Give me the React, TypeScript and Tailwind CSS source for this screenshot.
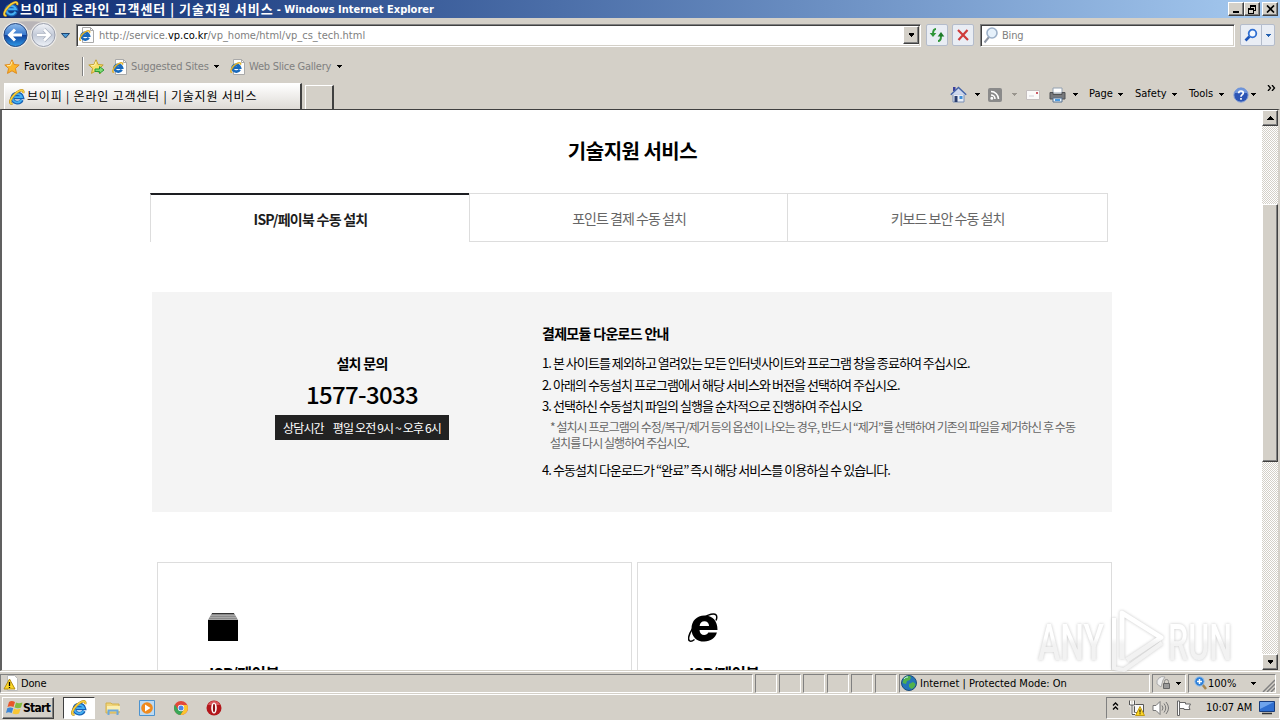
import type { ReactNode } from "react";

const ui = "font-['DejaVu_Sans_Condensed','DejaVu_Sans','Noto_Sans_CJK_KR',sans-serif] [font-stretch:condensed]";
const kr = "font-['Noto_Sans_CJK_KR',sans-serif]";

function IELogo({ size = 16, className = "" }: { size?: number; className?: string }) {
  return (
    <svg width={size} height={size} viewBox="0 0 16 16" className={`shrink-0 ${className}`} fill="none">
      <path d="M13 10.800A5.200 5.200 0 0 1 3.200 8.800 5.200 5.200 0 0 1 13.300 8.400H5" stroke="#1660b4" strokeWidth="3.600" />
      <path d="M12.600 10.800A4.900 4.900 0 0 1 3.400 8.800 5 5 0 0 1 12.900 8.100H5.200" stroke="#45b0f2" strokeWidth="1.800" />
      <path d="M3.400 14.300C1.400 15 .7 13.600 1.600 11.200 2.900 7.600 7 3.200 11 1.700c2.700-1 3.900.1 3.100 2.300" stroke="#b8861c" strokeWidth="2.400" />
      <path d="M3.400 14.300C1.400 15 .7 13.600 1.600 11.200 2.900 7.600 7 3.200 11 1.700c2.700-1 3.900.1 3.100 2.300" stroke="#f7d33f" strokeWidth="1.400" />
    </svg>
  );
}

function PageIcon() {
  return (
    <svg width="16" height="16" viewBox="0 0 16 16" className="shrink-0" fill="none">
      <path d="M3.500.5h8l3 3v12h-11z" fill="#fdfdfd" stroke="#a9a9a9" />
      <path d="M11.500.5v3h3" stroke="#a9a9a9" />
      <path d="M9.700 10.600A3.900 3.900 0 0 1 2.400 9a3.900 3.900 0 0 1 7.600-.4H4" stroke="#1a6abc" strokeWidth="2.600" />
      <path d="M2 13.200C.6 13.600.4 12.400 1.200 10.600 2.300 8 5.400 5 8.200 4c2-.6 2.900.1 2.300 1.700" stroke="#dfb02c" strokeWidth="1.400" />
    </svg>
  );
}

function Caret({ color = "#000", className = "" }: { color?: string; className?: string }) {
  return (
    <svg width="5" height="3" viewBox="0 0 5 3" className={`shrink-0 ${className}`} shapeRendering="crispEdges">
      <path d="M0 0h5L2.500 3z" fill={color} />
    </svg>
  );
}

function WinButton({ children, className = "" }: { children: ReactNode; className?: string }) {
  return (
    <div className={`flex shrink-0 items-center justify-center border border-t-white border-l-white border-r-[#404040] border-b-[#404040] bg-[#d4d0c8] shadow-[inset_-1px_-1px_0_#808080] ${className}`}>
      {children}
    </div>
  );
}

function TitleBar() {
  return (
    <div className="flex h-[18px] items-center bg-linear-to-r from-[#0f2b72] to-[#a6caf0] pl-[3px]">
      <IELogo />
      <span className={`${ui} ml-px flex items-center text-[11px] leading-[18px] font-bold whitespace-nowrap text-white`}>
        <span className={`${kr} text-[13px] tracking-[1px]`}>브이피 | 온라인 고객센터 | 기술지원 서비스</span>
        <span className="ml-[3px] pt-px">- Windows Internet Explorer</span>
      </span>
      <div className="mr-[2px] ml-auto flex">
        <WinButton className="h-[14px] w-4">
          <svg width="10" height="9" shapeRendering="crispEdges"><path d="M2 6h6v2H2z" /></svg>
        </WinButton>
        <WinButton className="h-[14px] w-4">
          <svg width="10" height="10" fill="none" stroke="#000" shapeRendering="crispEdges">
            <path d="M3 1h6M3 2h5.500v4H7M3.500 2v2M1 4h6M1 5h5.500v4h-5z" />
          </svg>
        </WinButton>
        <WinButton className="ml-[2px] h-[14px] w-4">
          <svg width="9" height="8" stroke="#000" strokeWidth="1.700"><path d="M1 .5 8 7.500M8 .5 1 7.500" /></svg>
        </WinButton>
      </div>
    </div>
  );
}

function NavOrbs() {
  return (
    <svg width="74" height="30" viewBox="0 0 74 30" className="shrink-0">
      <defs>
        <linearGradient id="back" x1="0" y1="0" x2="0" y2="1">
          <stop offset="0" stopColor="#8fbcec" />
          <stop offset=".48" stopColor="#3a7ace" />
          <stop offset=".5" stopColor="#0f3f9a" />
          <stop offset="1" stopColor="#2f9be8" />
        </linearGradient>
        <linearGradient id="fwd" x1="0" y1="0" x2="0" y2="1">
          <stop offset="0" stopColor="#f3f5f9" />
          <stop offset=".5" stopColor="#c3cad8" />
          <stop offset="1" stopColor="#eef2f8" />
        </linearGradient>
      </defs>
      <path d="M15 2c8-1 20-1 29 0v8H15z" fill="#b9b5b8" />
      <circle cx="15.500" cy="15" r="13" fill="#eceae8" />
      <circle cx="43.500" cy="15" r="13" fill="#eceae8" />
      <circle cx="15.500" cy="15" r="11.500" fill="url(#back)" stroke="#27477f" />
      <circle cx="43.500" cy="15" r="11.500" fill="url(#fwd)" stroke="#9a9fac" />
      <path d="M22 15H10M15 9.500 9.500 15l5.500 5.500" stroke="#fff" strokeWidth="3" fill="none" />
      <path d="M37 15h12M44 9.500l5.500 5.500-5.500 5.500" stroke="#a9b0bf" strokeWidth="4" fill="none" />
      <path d="M37 15h12M44 9.500l5.500 5.500-5.500 5.500" stroke="#fff" strokeWidth="2.600" fill="none" />
      <path d="M61.500 13.500h8l-4 4.500z" fill="#4e9bd6" stroke="#1d4470" />
    </svg>
  );
}

function ToolButton({ children, className = "" }: { children: ReactNode; className?: string }) {
  return (
    <div className={`flex h-[22px] shrink-0 items-center justify-center rounded-[2px] border border-[#b4bccb] bg-[#e9edf4] ${className}`}>
      {children}
    </div>
  );
}

function Sunken({ children, className = "" }: { children?: ReactNode; className?: string }) {
  return (
    <div className={`flex h-[23px] items-center border border-t-[#808080] border-l-[#808080] border-r-white border-b-white bg-white shadow-[inset_1px_1px_0_#404040,inset_-1px_-1px_0_#d4d0c8] ${className}`}>
      {children}
    </div>
  );
}

function AddressRow() {
  return (
    <div className="flex h-[34px] items-center">
      <NavOrbs />
      <Sunken className="ml-[2px] w-[845px] pl-[2px]">
        <PageIcon />
        <span className={`${ui} ml-1 pt-[2px] text-[11px] whitespace-nowrap text-[#808080]`}>
          http://service.<span className="text-black">vp.co.kr</span>/vp_home/html/vp_cs_tech.html
        </span>
        <WinButton className="mr-px ml-auto h-[18px] w-4"><Caret className="h-1 w-[7px]" /></WinButton>
      </Sunken>
      <ToolButton className="ml-[5px] w-[22px]">
        <svg width="16" height="14" viewBox="0 0 16 14" fill="none" stroke="#2f9638" strokeWidth="2">
          <path d="M7 1C4.500 1 4 3 4 6" /><path d="M.7 5h6.600L4 9z" fill="#2f9638" stroke="none" />
          <path d="M9 13c2.500 0 3-2 3-5" /><path d="M8.700 8.500h6.600L12 4z" fill="#1d7a28" stroke="none" />
        </svg>
      </ToolButton>
      <ToolButton className="ml-1 w-[22px]">
        <svg width="12" height="12" stroke="#cf3b3b" strokeWidth="2.200"><path d="M1 1l10 10M10.500 1 1.500 11" /></svg>
      </ToolButton>
      <Sunken className="ml-[6px] w-[255px] pl-[2px]">
        <svg width="16" height="18" viewBox="0 0 16 18" fill="none">
          <path d="M6 11 1.500 16.500" stroke="#8f97a5" strokeWidth="2" />
          <circle cx="9" cy="7" r="5" fill="#e6f1fb" stroke="#9db1c9" strokeWidth="1.600" />
        </svg>
        <span className={`${ui} ml-[3px] pt-[2px] text-[11px] tracking-[-0.2px] text-[#808080]`}>Bing</span>
      </Sunken>
      <div className="ml-[5px] flex">
        <ToolButton className="w-[22px] rounded-r-none">
          <svg width="14" height="14" fill="none"><path d="M5.500 8.500 1.500 12.500" stroke="#1c54b8" strokeWidth="2.600" /><circle cx="8.500" cy="5.500" r="3.800" fill="#f4f9ff" stroke="#2f6fd2" strokeWidth="1.800" /></svg>
        </ToolButton>
        <ToolButton className="-ml-px w-[14px] rounded-l-none"><Caret color="#2460b0" /></ToolButton>
      </div>
    </div>
  );
}

function Star({ add = false }: { add?: boolean }) {
  return (
    <svg width="17" height="16" viewBox="0 0 17 16" className="shrink-0">
      <path d="M8 .8l2.100 4.700 5.100.5-3.800 3.400 1.100 5L8 11.800l-4.500 2.600 1.100-5L.8 6l5.100-.5z" fill={add ? "#f7e06a" : "#fbb62b"} stroke={add ? "#c2a02c" : "#e08a1c"} />
      <path d="M8 2.500 6.600 6.300 3 6.800" stroke="#fff0b0" fill="none" />
      {add && <path d="M7 10h4.500V7.500L16 11l-4.500 3.500V12.500H7z" fill="#7fdc74" stroke="#2b9a35" />}
    </svg>
  );
}

function FavoritesBar() {
  return (
    <div className={`${ui} flex h-[29px] items-center pl-1 text-[11px] whitespace-nowrap`}>
      <Star />
      <span className="ml-[3px] w-[46px] pt-px tracking-[0.1px]">Favorites</span>
      <div className="ml-3 h-[19px] w-[2px] border-l border-l-[#808080] bg-white" />
      <div className="ml-1"><Star add /></div>
      <div className="ml-[7px]"><PageIcon /></div>
      <span className="ml-[3px] w-[78px] pt-[2px] tracking-[-0.15px] text-[#808080]">Suggested Sites</span>
      <Caret className="ml-[5px]" />
      <div className="ml-[11px]"><PageIcon /></div>
      <span className="ml-[3px] w-[83px] pt-[2px] tracking-[-0.25px] text-[#808080]">Web Slice Gallery</span>
      <Caret className="ml-[5px]" />
    </div>
  );
}

function CommandBar() {
  return (
    <div className={`${ui} ml-auto flex h-[27px] items-center self-start pr-1 text-[11px] whitespace-nowrap`}>
      <svg width="17" height="17" viewBox="0 0 17 17">
        <path d="M3 8h11v8H3z" fill="#e8edf6" stroke="#7a8fb5" />
        <path d="M3 1h2.500v4H3z" fill="#3b3f9c" />
        <path d="M.8 8.800 8.500 1.500l7.700 7.300" fill="#cfd9ee" stroke="#4464a8" strokeWidth="1.500" />
        <path d="M4.500 10h3v6h-3z" fill="#2b3f70" /><path d="M9.500 10h3v3h-3z" fill="#3f8fd8" />
      </svg>
      <Caret className="ml-[8px]" />
      <svg width="14" height="14" viewBox="0 0 14 14" className="ml-2" fill="none" stroke="#fff" strokeWidth="1.600">
        <rect width="14" height="14" rx="2" fill="#8a8a8a" stroke="none" />
        <path d="M3 7a4 4 0 0 1 4 4M3 3.500a7.500 7.500 0 0 1 7.500 7.500" /><circle cx="3.800" cy="10.300" r=".7" />
      </svg>
      <Caret color="#99958e" className="ml-[10px]" />
      <svg width="14" height="10" viewBox="0 0 14 10" className="ml-[9px]">
        <path d="M.5.5h13v9H.5z" fill="#fbfafa" stroke="#c5bfbf" /><path d="M10 2h2v2h-2z" fill="#cc5c68" /><path d="M3 6h5" stroke="#cfcfd8" />
      </svg>
      <svg width="17" height="16" viewBox="0 0 17 16" className="ml-[9px]">
        <path d="M4 1h9v5H4z" fill="#fff" stroke="#92a0b0" />
        <path d="M1 5.500h3v2h9v-2h3V12H1z" fill="#77797c" stroke="#505254" />
        <path d="M4 11h9v4H4z" fill="#e5f3ff" stroke="#58708c" /><path d="M6 12h5v2H6z" fill="#4b9ae0" />
      </svg>
      <Caret className="ml-[7px]" />
      <span className="ml-[11px] w-6">Page</span><Caret className="ml-[5px]" />
      <span className="ml-3 w-[32px]">Safety</span><Caret className="ml-[5px]" />
      <span className="ml-3 w-[26px]">Tools</span><Caret className="ml-1" />
      <svg width="16" height="16" viewBox="0 0 16 16" className="ml-[9px]">
        <circle cx="8" cy="8" r="7.200" fill="#2c55b5" stroke="#8ea6d6" />
        <path d="M1.500 6a6.700 6.700 0 0 1 13 0z" fill="#6f96dc" />
        <path d="M5.700 6.200c0-3 4.700-2.800 4.600-.2C10.300 7.700 8 7.500 8 9.700M8 11v1.800" stroke="#fff" strokeWidth="1.700" fill="none" />
      </svg>
      <Caret className="ml-[2px]" />
      <svg width="9" height="6" viewBox="0 0 9 6" className="mb-[14px] ml-[11px]" fill="none" stroke="#000" strokeWidth="1.300"><path d="M1 0l2.500 3L1 6M5 0l2.500 3L5 6" /></svg>
    </div>
  );
}

function TabRow() {
  return (
    <div className="flex h-[28px] items-end pl-1">
      <div className="flex h-[26px] w-[298px] shrink-0 items-center border-t border-r-2 border-l border-t-white border-r-[#404040] border-l-white bg-linear-to-b from-white to-[#dedbd6] pl-1">
        <IELogo />
        <span className={`${kr} mb-[2px] ml-[2px] text-[12px] leading-[20px] tracking-[0.8px] whitespace-nowrap`}>브이피 | 온라인 고객센터 | 기술지원 서비스</span>
      </div>
      <div className="ml-[3px] h-[24px] w-[29px] border-t border-r-2 border-l border-t-white border-r-[#404040] border-l-white" />
      <CommandBar />
    </div>
  );
}

function Scrollbar() {
  return (
    <div className="flex w-4 shrink-0 flex-col bg-[repeating-conic-gradient(#ffffff_0_25%,#d4d0c8_0_50%)] bg-[length:2px_2px]">
      <WinButton className="h-4"><svg width="7" height="4" shapeRendering="crispEdges"><path d="M3.500 0 7 4H0z" /></svg></WinButton>
      <WinButton className="mt-[78px] h-[258px]">{null}</WinButton>
      <WinButton className="mt-auto h-4"><Caret className="h-1 w-[7px]" /></WinButton>
    </div>
  );
}

function PageContent() {
  return (
    <div className={`${kr} min-w-0 flex-1 overflow-hidden bg-white text-black`}>
      <h1 className="mt-[26px] h-[30px] pl-px text-center text-[20px] leading-[30px] font-bold tracking-[-0.5px]">기술지원 서비스</h1>
      <div className="mt-[27px] ml-[148px] flex h-[49px] w-[958px] text-center text-[14px] whitespace-nowrap">
        <div className="w-[319px] border-t-2 border-l border-t-[#1d1e22] border-l-[#ddd] pl-px leading-[49px] font-bold tracking-[-0.75px] text-[#1d1d1d]">ISP/페이북 수동 설치</div>
        <div className="w-[318px] border border-r-0 border-[#ddd] pl-px leading-[48px] tracking-[-0.97px] text-[#666]">포인트 결제 수동 설치</div>
        <div className="w-[321px] border border-[#ddd] leading-[48px] tracking-[-0.97px] text-[#666]">키보드 보안 수동 설치</div>
      </div>
      <section className="mt-[50px] ml-[150px] flex h-[220px] w-[960px] bg-[#f4f4f4] whitespace-nowrap">
        <div className="flex w-[390px] flex-col items-center pt-[61px] pl-[30px]">
          <div className="text-[14px] leading-[20px] font-bold tracking-[-0.7px]">설치 문의</div>
          <div className="mt-1 text-[24px] leading-[34px] font-medium tracking-[-0.65px]">1577-3033</div>
          <div className="mt-[4px] flex h-[25px] w-[174px] items-center gap-[9px] bg-[#222] pl-2 text-[12px] leading-[25px] tracking-[-0.85px] text-white">
            <span>상담시간</span><span>평일 오전 9시 ~ 오후 6시</span>
          </div>
        </div>
        <div className="pt-[31px] text-[13px] tracking-[-0.95px]">
          <div className="h-[20px] text-[14px] leading-[20px] font-bold tracking-[-0.7px]">결제모듈 다운로드 안내</div>
          <div className="mt-[9px] leading-[22px]">1. 본 사이트를 제외하고 열려있는 모든 인터넷사이트와 프로그램 창을 종료하여 주십시오.</div>
          <div className="leading-[22px]">2. 아래의 수동설치 프로그램에서 해당 서비스와 버전을 선택하여 주십시오.</div>
          <div className="leading-[20px]">3. 선택하신 수동설치 파일의 실행을 순차적으로 진행하여 주십시오</div>
          <div className="mt-[3px] pl-2 text-[12px] leading-[16px] tracking-[-0.94px] text-[#666]">
            * 설치시 프로그램의 수정/복구/제거 등의 옵션이 나오는 경우, 반드시 “제거”를 선택하여 기존의 파일을 제거하신 후 수동<br />설치를 다시 실행하여 주십시오.
          </div>
          <div className="mt-[8px] leading-[22px]">4. 수동설치 다운로드가 “완료” 즉시 해당 서비스를 이용하실 수 있습니다.</div>
        </div>
      </section>
      <div className="mt-[50px] ml-[155px] flex gap-[5px]">
        <div className="h-[200px] w-[475px] border border-[#ddd] pt-[50px] pl-[50px]">
          <svg width="31" height="29" fill="none">
            <path d="M4 0h22l4 7H0z" fill="#8b8b8b" />
            <path d="M4 .5h22" stroke="#333" /><path d="M3 2.500h24M2 4.500h26M0 6.500h30" stroke="#b4b4b4" strokeWidth=".7" />
            <path d="M0 7h30v21H0z" fill="#000" />
          </svg>
          <div className="mt-[19px] pl-px text-[16px] leading-[24px] font-bold tracking-[-0.7px]">ISP/페이북</div>
        </div>
        <div className="h-[200px] w-[475px] border border-[#ddd] pt-[50px] pl-[50px]">
          <svg width="31" height="29" viewBox="0 0 31 29" fill="none" stroke="#000">
            <path d="M29.500 17H11.500c.3 3.300 2 5 4.700 5 2 0 3.400-.8 4.100-2.400h8.600C27.400 25 22.600 28.600 16.300 28.600 8.500 28.600 3.500 23.500 3.500 15.900 3.500 8 8.800 2.600 16.400 2.600c8.300 0 13.200 5.500 13.100 14.400zM11.600 13h9.500c-.2-2.900-2-4.700-4.700-4.700-2.700 0-4.500 1.700-4.800 4.700z" fill="#000" stroke="none" />
            <path d="M6.500 26.500C2.500 29.500-.5 28.500 1 23 3 15 14 3.500 23 1.300c5-1.200 7 1.200 5 6.200" strokeWidth="1.500" />
          </svg>
          <div className="mt-[19px] pl-px text-[16px] leading-[24px] font-bold tracking-[-0.7px]">ISP/페이북</div>
        </div>
      </div>
    </div>
  );
}

function Cell({ children, className = "" }: { children?: ReactNode; className?: string }) {
  return (
    <div className={`flex h-[19px] shrink-0 items-center border border-t-[#808080] border-l-[#808080] border-r-white border-b-white ${className}`}>
      {children}
    </div>
  );
}

function StatusBar() {
  return (
    <div className={`${ui} flex h-[23px] items-center gap-[2px] border-t border-t-white text-[11px] whitespace-nowrap`}>
      <Cell className="w-[753px] pl-[2px]">
        <svg width="16" height="16" viewBox="0 0 16 16">
          <path d="M4.500.5h7l3 3v12h-10z" fill="#fff" stroke="#bbb" />
          <path d="M6.500 4 12 14H1z" fill="#fbd626" stroke="#b48c10" /><path d="M6.500 7v4M6.500 12v1" stroke="#000" strokeWidth="1.300" />
        </svg>
        <span className="ml-[2px] pt-[2px] tracking-[-0.15px]">Done</span>
      </Cell>
      <Cell className="w-[22px]" /><Cell className="w-[22px]" /><Cell className="w-[22px]" />
      <Cell className="w-[22px]" /><Cell className="w-[22px]" /><Cell className="w-[22px]" />
      <Cell className="w-[251px] pl-px">
        <svg width="16" height="16" viewBox="0 0 16 16">
          <circle cx="8" cy="8" r="7.500" fill="#2374b8" stroke="#1b4c7c" />
          <path d="M3 3c3-3 6-2 7-1L9 5 6 6 5 9 1.500 8zM8 9l4-2 2.500 2c-.5 3-2 4-4 5L8 12z" fill="#51b24b" />
          <path d="M3 4c1-1.500 2.500-2 4-2" stroke="#c8ecff" fill="none" />
        </svg>
        <span className="ml-[3px] pt-[2px]">Internet | Protected Mode: On</span>
      </Cell>
      <Cell className="w-[34px] pl-[3px]">
        <svg width="16" height="16" viewBox="0 0 16 16"><path d="M1 9a6 6 0 0 1 8-7l-2 3-2 7z" fill="#f0f0f0" stroke="#aaa" /><path d="M7.500 8.500h6v5h-6z" fill="#999" stroke="#666" /><path d="M8.500 8V6.500a2 2 0 0 1 4 0V8" stroke="#888" fill="none" /></svg>
        <Caret className="ml-1" />
      </Cell>
      <Cell className="w-[88px] border-r-transparent pl-[5px]">
        <svg width="13" height="15" viewBox="0 0 13 15"><path d="m8 8 4 5" stroke="#a88752" strokeWidth="2.500" /><circle cx="5.500" cy="5.500" r="4.700" fill="#2f80d8" stroke="#9dc4ec" /><path d="M3 5.500h5M5.500 3v5" stroke="#fff" strokeWidth="1.500" /></svg>
        <span className="ml-px w-[29px] pt-[2px]">100%</span>
        <Caret className="ml-[14px]" />
        <svg width="13" height="13" className="mt-1 ml-auto" stroke="#808080" strokeWidth="1.500"><path d="M1 13 13 1M5 13l8-8M9 13l4-4" /></svg>
      </Cell>
    </div>
  );
}

function Taskbar() {
  return (
    <div className={`${ui} flex h-[26px] items-center border-t border-t-white pl-[2px] text-[11px] whitespace-nowrap`}>
      <WinButton className="h-[22px] w-[52px]">
        <svg width="17" height="16" viewBox="0 0 17 16">
          <path d="M3 2c2-1.500 4-1 6 0L7.500 7c-2-1-4-1-6 0z" fill="#e8572a" /><path d="M10 2.500c2 1 4 1 6.500 0L15 7.500c-2 1-4 1-6.500 0z" fill="#82bb41" />
          <path d="M1.200 8.300c2-1 4-1 6 0L5.700 13c-2-1-4-1-5.700 0z" fill="#3c86d6" /><path d="M8 8.800c2 1 4 1 6.500 0L13 13.500c-2 1-4 1-6.500 0z" fill="#f9c634" />
        </svg>
        <span className="text-[12px] font-bold tracking-[-0.7px]">Start</span>
      </WinButton>
      <div className="ml-[9px] flex h-[22px] w-[32px] items-center justify-center border border-t-[#404040] border-l-[#404040] border-r-white border-b-white bg-white"><IELogo /></div>
      <svg width="16" height="16" viewBox="0 0 16 16" className="ml-[10px]">
        <path d="M1 3h5l1 1h7v9H1z" fill="#f0d477" stroke="#d3b04c" /><path d="M2 6h13v5H2z" fill="#fbeeb0" />
        <path d="M3.500 15v-4.500h9V15" stroke="#6ba8dc" strokeWidth="2" fill="none" />
      </svg>
      <svg width="16" height="16" viewBox="0 0 16 16" className="ml-[18px]">
        <path d="M.5.5h15v15H.5z" fill="#bddaf2" stroke="#4c93cf" /><circle cx="8" cy="8" r="5.800" fill="#f08a1d" /><path d="M6 4.500 11.500 8 6 11.500z" fill="#fff" />
      </svg>
      <svg width="14" height="14" viewBox="0 0 14 14" className="ml-[19px]">
        <circle cx="7" cy="7" r="7" fill="#e2483a" /><path d="M.9 3.500A7 7 0 0 0 6.500 14L9.500 9 4 8.500z" fill="#3aa757" /><path d="M13.200 4A7 7 0 0 1 6.500 14L10 8.500 8.500 4z" fill="#fbc52d" />
        <circle cx="7" cy="7" r="3.200" fill="#fff" /><circle cx="7" cy="7" r="2.500" fill="#4a86e8" />
      </svg>
      <svg width="16" height="16" viewBox="0 0 16 16" className="ml-[18px]">
        <circle cx="8" cy="8" r="7.500" fill="#b3161b" /><path d="M2 5a6.500 6.500 0 0 1 12 0z" fill="#d9555a" /><ellipse cx="8" cy="8" rx="2.800" ry="5.500" fill="#fff" /><ellipse cx="8" cy="8" rx="1.100" ry="4.300" fill="#8d0e12" />
      </svg>
      <div className="ml-auto flex h-[22px] w-[174px] items-center border border-t-[#808080] border-l-[#808080] border-r-white border-b-white pl-[5px]">
        <svg width="7" height="8" viewBox="0 0 7 8" className="mb-[3px]" fill="none" stroke="#000" strokeWidth="1.300"><path d="M1 3.500 3.500 1 6 3.500M1 7.500 3.500 5 6 7.500" /></svg>
        <svg width="16" height="16" viewBox="0 0 16 16" className="ml-[10px]" fill="none">
          <path d="M5.500 4.500h9v8h-9zM7 15h7" fill="#f8f8f8" stroke="#555" /><path d="M1 1v4h4V1M3 5v9h4" stroke="#fff" strokeWidth="2.500" /><path d="M.5.500v4.500h5V.5M3 5v9.500h3" stroke="#555" />
          <path d="m11 6.500 4.500 9h-9z" fill="#fbd626" stroke="#c29a12" /><path d="M11 9.500v3M11 13.300v1" stroke="#000" />
        </svg>
        <svg width="17" height="16" viewBox="0 0 17 16" className="ml-[7px]" fill="none" stroke="#777"><path d="M1 5.500h3L8 1.500v13L4 10.500H1z" fill="#fff" /><path d="M10 5.500q2 2.500 0 5M12 3.500q3.500 4.500 0 9M14 2q5 6 0 12" /></svg>
        <svg width="16" height="16" viewBox="0 0 16 16" className="ml-[7px]" fill="#fff" stroke="#666"><path d="M1.500 1v14.500h2V1zM3.500 2.500h6v1.500h5l-1.500 3 1 2.500H8V8.500H3.500z" /></svg>
        <span className="ml-[14px] w-[46px] pt-px tracking-[-0.1px]">10:07 AM</span>
        <svg width="16" height="14" viewBox="0 0 16 14" className="ml-[7px]"><path d="M.5.5h15v10H.5z" fill="#2f6fd0" stroke="#173c7c" /><path d="M1 1h14L1 8z" fill="#6ea4ec" /><path d="M3 12.500h10" stroke="#333" strokeWidth="1.500" /></svg>
      </div>
    </div>
  );
}

function Watermark() {
  return (
    <svg className="absolute top-[604px] left-[1034px]" width="204" height="72" viewBox="0 0 204 72">
      <defs>
        <linearGradient id="mark" gradientUnits="userSpaceOnUse" x1="0" y1="34" x2="0" y2="40">
          <stop offset="0" stopColor="#ffffff" />
          <stop offset="1" stopColor="#f1f1f1" />
        </linearGradient>
      </defs>
      <g className="font-['Roboto','Liberation_Sans',sans-serif] text-[50px] font-medium opacity-90 [filter:drop-shadow(0_0_1.5px_#c0c0c0)]" fill="url(#mark)" stroke="none">
        <text x="4" y="56" textLength="66" lengthAdjust="spacingAndGlyphs">ANY</text>
        <text x="134" y="56" textLength="64" lengthAdjust="spacingAndGlyphs">RUN</text>
        <path d="M80 14v50l10 2 38-27" fill="none" stroke="url(#mark)" strokeWidth="4" strokeLinejoin="round" />
        <path d="M88 55V9l39 24.500L93 56" fill="none" stroke="url(#mark)" strokeWidth="5" strokeLinejoin="round" />
      </g>
    </svg>
  );
}

export default function App() {
  return (
    <div className="relative flex h-[720px] w-[1280px] flex-col overflow-hidden bg-[#d4d0c8] text-black">
      <TitleBar />
      <AddressRow />
      <FavoritesBar />
      <TabRow />
      <div className="flex h-[562px] shrink-0 border-t border-r-2 border-b border-l-2 border-t-[#404040] border-r-[#d4d0c8] border-b-[#d4d0c8] border-l-[#606060]">
        <PageContent />
        <Scrollbar />
      </div>
      <StatusBar />
      <Taskbar />
      <Watermark />
    </div>
  );
}
